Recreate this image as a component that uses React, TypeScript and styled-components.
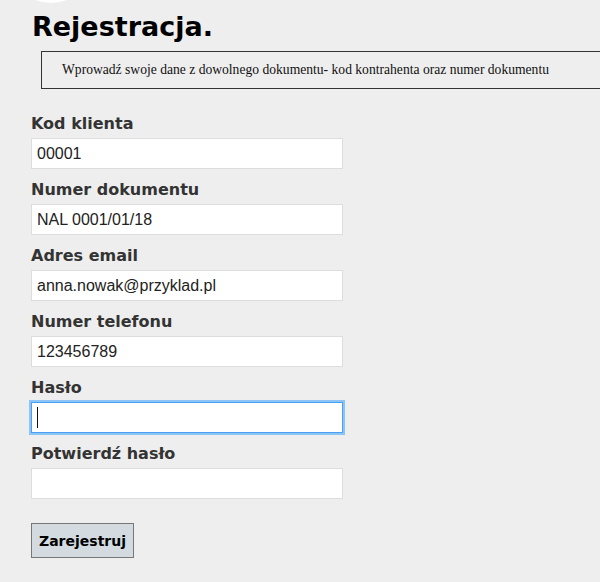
import React from "react";
import styled, { createGlobalStyle } from "styled-components";

const Global = createGlobalStyle`
  html, body { margin: 0; padding: 0; background: #eeeeee; overflow: hidden; }
  body { width: 600px; height: 582px; }
`;

const Page = styled.div`
  padding-left: 31px;
  display: flex;
  flex-direction: column;
  align-items: flex-start;
`;

const Logo = styled.div`
  width: 88px;
  height: 88px;
  border-radius: 50%;
  background: #ffffff;
  margin: -85px 0 0 -24px;
`;

const Title = styled.h1`
  font-family: "DejaVu Sans", Verdana, sans-serif;
  font-weight: bold;
  font-size: 27px;
  line-height: 32px;
  color: #000;
  margin: 8px 0 8px 1px;
`;

const Info = styled.div`
  box-sizing: border-box;
  margin-left: 10px;
  width: 600px;
  height: 38px;
  border: 1px solid #333;
  padding: 0 0 0 20px;
  display: flex;
  align-items: center;
  font-family: "Liberation Serif", "Times New Roman", serif;
  font-size: 13.6px;
  color: #111;
  white-space: nowrap;
`;

const Form = styled.form`
  display: flex;
  flex-direction: column;
  margin-top: 26px;
`;

const Field = styled.div`
  display: flex;
  flex-direction: column;
  gap: 5px;
  margin-bottom: 12px;
`;

const Label = styled.label`
  font-family: "DejaVu Sans", Verdana, sans-serif;
  font-weight: bold;
  font-size: 16px;
  line-height: 18px;
  color: #333;
`;

const InputWrap = styled.div`
  position: relative;
  width: 312px;
  height: 31px;
`;

const Input = styled.input<{ $focused?: boolean }>`
  box-sizing: border-box;
  width: 312px;
  height: 31px;
  margin: 0;
  padding: 0 5px;
  border: 1px solid ${(p) => (p.$focused ? "#4a9ff0" : "#dddddd")};
  box-shadow: ${(p) => (p.$focused ? "0 0 0 2px #8cc4f5" : "none")};
  background: #fff;
  font-family: "Liberation Sans", Arial, sans-serif;
  font-size: 16px;
  color: #222;
  outline: none;
  border-radius: 0;
  caret-color: transparent;
`;

const Caret = styled.span`
  position: absolute;
  left: 6px;
  top: 5px;
  width: 1px;
  height: 21px;
  background: #111;
  pointer-events: none;
`;

const Button = styled.button`
  box-sizing: border-box;
  margin-top: 12px;
  height: 35px;
  padding: 0 7px;
  align-self: flex-start;
  background: #d3dbe1;
  border: 1px solid #777;
  border-radius: 0;
  font-family: "DejaVu Sans", Verdana, sans-serif;
  font-weight: bold;
  font-size: 14px;
  color: #000;
`;

const fields: { label: string; value: string; focused?: boolean }[] = [
  { label: "Kod klienta", value: "00001" },
  { label: "Numer dokumentu", value: "NAL 0001/01/18" },
  { label: "Adres email", value: "anna.nowak@przyklad.pl" },
  { label: "Numer telefonu", value: "123456789" },
  { label: "Hasło", value: "", focused: true },
  { label: "Potwierdź hasło", value: "" },
];

export default function App() {
  return (
    <>
      <Global />
      <Page>
        <Logo />
        <Title>Rejestracja.</Title>
        <Info>Wprowadź swoje dane z dowolnego dokumentu- kod kontrahenta oraz numer dokumentu</Info>
        <Form onSubmit={(e) => e.preventDefault()}>
          {fields.map((f) => (
            <Field key={f.label}>
              <Label>{f.label}</Label>
              <InputWrap>
                <Input
                  $focused={f.focused}
                  type={f.label.startsWith("Has") || f.label.startsWith("Potw") ? "password" : "text"}
                  defaultValue={f.value}
                />
                {f.focused && <Caret />}
              </InputWrap>
            </Field>
          ))}
          <Button type="submit">Zarejestruj</Button>
        </Form>
      </Page>
    </>
  );
}
